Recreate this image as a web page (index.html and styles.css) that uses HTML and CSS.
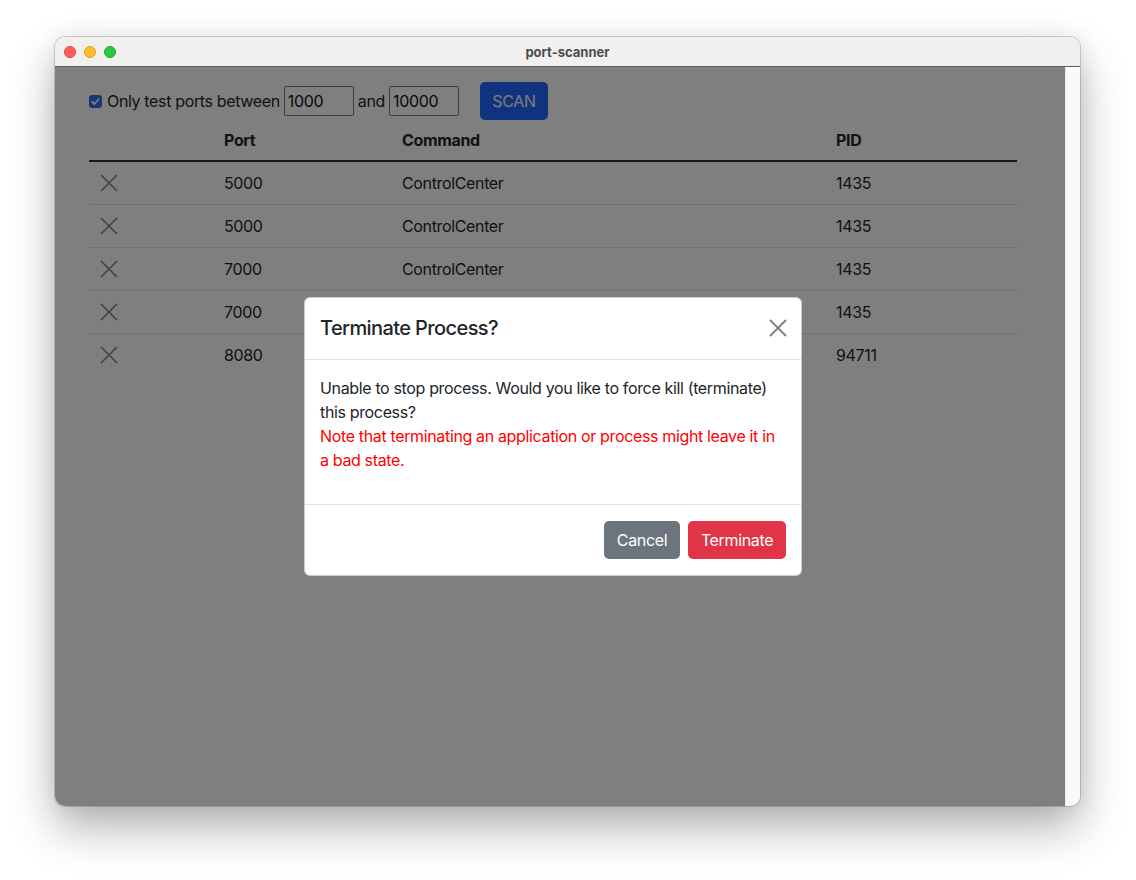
FILE: index.html
```html
<!DOCTYPE html>
<html lang="en">
<head>
<meta charset="utf-8">
<title>port-scanner</title>
<link rel="stylesheet" href="styles.css">
</head>
<body>
<div class="window">
  <div class="titlebar">
    <div class="lights">
      <span class="light close"></span>
      <span class="light min"></span>
      <span class="light max"></span>
    </div>
    <div class="title">port-scanner</div>
    <div></div>
  </div>
  <div class="content">
    <div class="page">
      <div class="toolbar">
        <label class="range">
          <span class="check"><svg width="13" height="13" viewBox="0 0 13 13"><path d="M3.2 6.8 L5.4 9 L9.8 4" fill="none" stroke="#fff" stroke-width="1.8" stroke-linecap="round" stroke-linejoin="round"/></svg></span>
          <span class="label-text">Only test ports between</span>
          <input class="num" type="text" value="1000">
          <span class="label-text">and</span>
          <input class="num" type="text" value="10000">
        </label>
        <button class="btn btn-scan">SCAN</button>
      </div>
      <table class="ports">
        <thead>
          <tr><th class="c-kill"></th><th class="c-port">Port</th><th class="c-cmd">Command</th><th class="c-pid">PID</th></tr>
        </thead>
        <tbody>
          <tr><td><svg class="kill" width="20" height="20" viewBox="0 0 20 20"><path d="M2 2 L18 18 M18 2 L2 18" stroke="#888" stroke-width="1.7"/></svg></td><td>5000</td><td>ControlCenter</td><td>1435</td></tr>
          <tr><td><svg class="kill" width="20" height="20" viewBox="0 0 20 20"><path d="M2 2 L18 18 M18 2 L2 18" stroke="#888" stroke-width="1.7"/></svg></td><td>5000</td><td>ControlCenter</td><td>1435</td></tr>
          <tr><td><svg class="kill" width="20" height="20" viewBox="0 0 20 20"><path d="M2 2 L18 18 M18 2 L2 18" stroke="#888" stroke-width="1.7"/></svg></td><td>7000</td><td>ControlCenter</td><td>1435</td></tr>
          <tr><td><svg class="kill" width="20" height="20" viewBox="0 0 20 20"><path d="M2 2 L18 18 M18 2 L2 18" stroke="#888" stroke-width="1.7"/></svg></td><td>7000</td><td>ControlCenter</td><td>1435</td></tr>
          <tr><td><svg class="kill" width="20" height="20" viewBox="0 0 20 20"><path d="M2 2 L18 18 M18 2 L2 18" stroke="#888" stroke-width="1.7"/></svg></td><td>8080</td><td>node</td><td>94711</td></tr>
        </tbody>
      </table>
      <div class="backdrop"></div>
      <div class="modal">
        <div class="modal-header">
          <h5 class="modal-title">Terminate Process?</h5>
          <button class="btn-close" aria-label="Close"><svg width="18" height="18" viewBox="0 0 18 18"><path d="M1 1 L17 17 M17 1 L1 17" stroke="#000" stroke-width="1.8"/></svg></button>
        </div>
        <div class="modal-body">
          <p>Unable to stop process. Would you like to force kill (terminate) this process?<br><span class="warn">Note that terminating an application or process might leave it in a bad state.</span></p>
        </div>
        <div class="modal-footer">
          <button class="btn btn-cancel">Cancel</button>
          <button class="btn btn-terminate">Terminate</button>
        </div>
      </div>
    </div>
    <div class="scrollbar"></div>
  </div>
</div>
</body>
</html>
```

FILE: styles.css
```css
* { box-sizing: border-box; }

html {
  height: 100%;
  background: #ffffff;
}

body {
  margin: 0;
  min-height: 100%;
  padding: 37px 0 0 55px;
  font-family: Inter, "Liberation Sans", sans-serif;
  letter-spacing: -0.022em;
  color: #212529;
  font-size: 16px;
  line-height: 1.5;
  background: #ffffff;
}

.window {
  width: 1025px;
  height: 769px;
  border-radius: 10px;
  overflow: hidden;
  display: flex;
  flex-direction: column;
  box-shadow: 0 0 0 1px rgba(0,0,0,0.16), 0 22px 45px rgba(0,0,0,0.30), 0 0 22px rgba(0,0,0,0.08);
}

.titlebar {
  height: 30px;
  flex: none;
  background: #f1f0ee;
  border-bottom: 1px solid #5c5c5c;
  display: grid;
  grid-template-columns: 1fr auto 1fr;
  align-items: center;
}

.lights {
  display: flex;
  gap: 8px;
  padding-left: 9px;
  padding-top: 1px;
}

.light {
  width: 12px;
  height: 12px;
  border-radius: 50%;
}
.light.close { background: #ff5f57; border: 0.5px solid #e0443e; }
.light.min { background: #febc2e; border: 0.5px solid #dea123; }
.light.max { background: #28c840; border: 0.5px solid #1aab29; }

.title {
  font-family: Inter, "Liberation Sans", sans-serif;
  font-weight: 700;
  font-size: 13px;
  letter-spacing: 0;
  color: #4d4d4d;
  line-height: 16px;
  padding-top: 1px;
}

.content {
  flex: 1;
  display: flex;
  min-height: 0;
}

.page {
  position: relative;
  width: 1010px;
  background: #ffffff;
  padding: 15px 0 0 34px;
}

.scrollbar {
  flex: 1;
  background: #fafafa;
  border-left: 1px solid #ececec;
}

.toolbar {
  display: flex;
  align-items: center;
  gap: 17px;
  height: 38px;
}

.range {
  display: flex;
  align-items: center;
}

.check {
  width: 13px;
  height: 13px;
  border-radius: 3px;
  background: #2f6fe6;
  display: inline-flex;
  margin-right: 5px;
  margin-top: 1px;
}

.label-text {
  margin-right: 4px;
}

.num {
  width: 70px;
  height: 30px;
  border: 1px solid #767676;
  border-radius: 2px;
  font-family: inherit;
  letter-spacing: inherit;
  font-size: 16px;
  color: #111;
  padding: 1px 3px;
  margin-right: 4px;
  background: #fff;
}

.btn {
  font-family: inherit;
  letter-spacing: inherit;
  font-size: 16px;
  line-height: 24px;
  padding: 6px 12px;
  border: 1px solid transparent;
  border-radius: 5px;
  color: #fff;
  cursor: pointer;
}

.btn-scan {
  background: #2066ff;
  color: #f8f9fa;
  width: 68px;
  height: 38px;
  padding: 6px 0;
}

.ports {
  width: 928px;
  border-collapse: collapse;
  table-layout: fixed;
}

.ports th {
  text-align: left;
  font-weight: 700;
  padding: 8px;
  border-bottom: 2px solid #333;
}

.c-kill { width: 127px; }
.c-port { width: 178px; }
.c-cmd { width: 434px; }
.c-pid { width: 189px; }

.ports td {
  padding: 9px 8px;
  height: 43px;
  border-bottom: 1px solid #dee2e6;
  vertical-align: middle;
}

.ports tbody tr:last-child td {
  border-bottom: none;
}

.kill {
  display: block;
  margin-left: 2px;
  margin-top: -1px;
}

.backdrop {
  position: absolute;
  inset: 0;
  background: rgba(0,0,0,0.5);
}

.modal {
  position: absolute;
  left: 249px;
  top: 230px;
  width: 498px;
  background: #fff;
  border: 1px solid rgba(0,0,0,0.2);
  border-radius: 6px;
  overflow: hidden;
}

.modal-header {
  display: flex;
  align-items: center;
  justify-content: space-between;
  padding: 15px 16px 16px 15px;
  border-bottom: 1px solid #dee2e6;
}

.modal-title {
  margin: 0;
  font-size: 20px;
  font-weight: 500;
  letter-spacing: -0.03em;
  line-height: 30px;
}

.btn-close {
  border: none;
  background: transparent;
  padding: 0;
  width: 18px;
  height: 18px;
  opacity: 0.5;
  margin-right: -2px;
  display: flex;
}

.modal-body {
  padding: 16px 16px 16px 15px;
}

.modal-body p {
  margin: 0 0 16px 0;
}

.warn {
  color: #ff0000;
}

.modal-footer {
  display: flex;
  justify-content: flex-end;
  gap: 8px;
  padding: 16px 15px;
  border-top: 1px solid #dee2e6;
}

.btn-cancel {
  background: #6c757d;
  width: 76px;
  padding: 6px 0;
}

.btn-terminate {
  background: #e03546;
  width: 98px;
  padding: 6px 0;
}
```
